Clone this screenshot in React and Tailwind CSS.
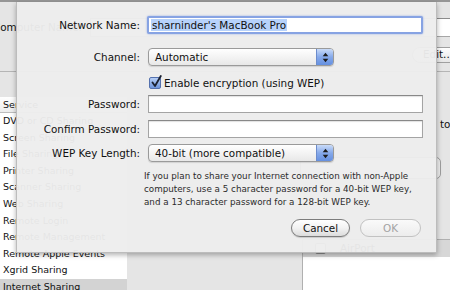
import React from 'react';

const services = [
  'DVD or CD Sharing',
  'Screen Sharing',
  'File Sharing',
  'Printer Sharing',
  'Scanner Sharing',
  'Web Sharing',
  'Remote Login',
  'Remote Management',
  'Remote Apple Events',
  'Xgrid Sharing',
  'Internet Sharing',
];

function Popup({ label }) {
  return (
    <div className="flex h-[18px] w-[186px] overflow-hidden rounded-[4px] border border-[#9a9a9a] bg-gradient-to-b from-white to-[#e8e8e8] shadow-[0_1px_1px_rgba(0,0,0,0.12)]">
      <div className="flex-1 pl-[6px] text-[10.4px] leading-[16px] text-[#111]">{label}</div>
      <div className="flex w-[17px] items-center justify-center border-l border-[#6c8ccc] bg-gradient-to-b from-[#c9dbf8] via-[#86a9ea] to-[#6590e0]">
        <svg width="7" height="11" viewBox="0 0 7 11">
          <path d="M3.5 0.8L6.3 4.3H0.7Z M3.5 10.2L0.7 6.7H6.3Z" fill="#1c1c1c" />
        </svg>
      </div>
    </div>
  );
}

function TextField() {
  return (
    <div className="h-[18px] w-[275px] border border-[#a4a4a4] border-t-[#888] bg-white shadow-[inset_0_1px_1px_rgba(0,0,0,0.12)]" />
  );
}

function Row({ label, children }) {
  return (
    <div className="flex items-center">
      <div className="w-[123px] text-right text-[10.4px] leading-[13px] text-[#111]">{label}</div>
      <div className="ml-[8px]">{children}</div>
    </div>
  );
}

export default function App() {
  return (
    <div className="relative h-[290px] w-[450px] overflow-hidden bg-[#e5e5e5] font-['DejaVu_Sans','Liberation_Sans',sans-serif] text-[#111]">
      {/* window behind the sheet */}
      <div className="flex h-full flex-col">
        <div className="h-[2px] shrink-0 bg-[#969696]" />
        <div className="flex h-[70px] shrink-0 flex-col border-b border-[#b5b5b5]">
          <div className="mt-[16px] flex items-center whitespace-nowrap">
            <span className="ml-[-7px] text-[10.4px] leading-[13px]">Computer Name:</span>
            <div className="ml-[8px] h-[19px] w-[380px] shrink-0 border border-[#a6a6a6] border-t-[#8c8c8c] bg-white" />
          </div>
          <div className="mt-[10px] flex whitespace-nowrap">
            <div className="ml-[412px] flex h-[16px] w-[70px] shrink-0 items-center rounded-full border border-[#a0a0a0] bg-gradient-to-b from-white to-[#e6e6e6] pl-[10px] text-[10.4px]">
              Edit...
            </div>
          </div>
        </div>
        <div className="flex flex-1">
          <div className="mt-[25px] flex w-[127px] shrink-0 flex-col bg-white">
            <div className="h-[16px] border-b border-[#bdbdbd] bg-gradient-to-b from-white to-[#ececec] pl-[3px] text-[9.5px] leading-[15px]">
              Service
            </div>
            {services.map((s) => (
              <div
                key={s}
                className={
                  s === 'Internet Sharing'
                    ? 'h-[16.6px] whitespace-nowrap bg-[#d3d3d3] pl-[3px] text-[9.5px] leading-[16.6px]'
                    : 'h-[16.6px] whitespace-nowrap pl-[3px] text-[9.5px] leading-[16.6px]'
                }
              >
                {s}
              </div>
            ))}
          </div>
          <div className="flex flex-1 flex-col">
            <div className="ml-[313px] mt-[46px] whitespace-nowrap text-[10.4px] leading-[13px]">to computers using:</div>
            <div className="ml-[173px] mt-[26px] h-[22px] w-[141px] rounded-[5px] border border-[#9d9d9d] bg-[#ececec]" />
            <div className="ml-[175px] mt-[60px] flex flex-1 flex-col border-l border-t border-[#b0b0b0] bg-white">
              <div className="flex h-[17px] items-center bg-[#d7d7d7]">
                <div className="ml-[12px] h-[11px] w-[11px] rounded-[2px] border border-[#8a8a8a] bg-white" />
                <span className="ml-[14px] whitespace-nowrap text-[10.4px]">AirPort</span>
              </div>
            </div>
          </div>
        </div>
      </div>

      {/* sheet */}
      <div className="absolute left-[16px] top-[2px] flex h-[251px] w-[421px] flex-col border-x border-b border-[#bcbcbc] bg-[#ededed]/[0.96] shadow-[0_2px_5px_rgba(0,0,0,0.3)]">
        <div className="mt-[14px]">
          <Row label="Network Name:">
            <div className="ml-[-1px] flex h-[18px] w-[276px] items-center rounded-[2px] border-2 border-[#87a3e3] bg-white pl-[2px] shadow-[0_0_2px_rgba(80,120,220,0.6)]">
              <span className="bg-[#b7d2fb] px-[1px] text-[10.4px] leading-[12px] whitespace-nowrap">sharninder's MacBook Pro</span>
            </div>
          </Row>
        </div>
        <div className="mt-[14px]">
          <Row label="Channel:">
            <Popup label="Automatic" />
          </Row>
        </div>
        <div className="mt-[11px] flex h-[12px] items-center pl-[132px]">
          <div className="relative h-[12px] w-[12px] rounded-[2px] border border-[#5471ae] bg-gradient-to-b from-[#b6cef5] to-[#6e95dc]">
            <svg className="absolute left-[1px] top-[-3px]" width="11" height="13" viewBox="0 0 11 13">
              <path d="M1.5 7.5L4 11L9.8 1" stroke="#1a2030" strokeWidth="1.8" fill="none" strokeLinecap="round" strokeLinejoin="round" />
            </svg>
          </div>
          <span className="ml-[3px] whitespace-nowrap text-[10.4px] leading-[13px]">Enable encryption (using WEP)</span>
        </div>
        <div className="mt-[6px]">
          <Row label="Password:">
            <TextField />
          </Row>
        </div>
        <div className="mt-[7px]">
          <Row label="Confirm Password:">
            <TextField />
          </Row>
        </div>
        <div className="mt-[6px]">
          <Row label="WEP Key Length:">
            <Popup label="40-bit (more compatible)" />
          </Row>
        </div>
        <p className="ml-[127px] mt-[7.5px] whitespace-nowrap text-[8.75px] leading-[13px] text-[#2b2b2b]">
          If you plan to share your Internet connection with non-Apple
          <br />
          computers, use a 5 character password for a 40-bit WEP key,
          <br />
          and a 13 character password for a 128-bit WEP key.
        </p>
        <div className="mr-[15px] mt-[10.5px] flex justify-end gap-[10px]">
          <button className="h-[18px] w-[59px] rounded-full border border-[#7c7c7c] bg-gradient-to-b from-white via-[#f2f2f2] to-[#dcdcdc] text-[10.4px] leading-[16px] text-[#111] shadow-[0_1px_1px_rgba(0,0,0,0.15)]">
            Cancel
          </button>
          <button className="h-[18px] w-[61px] rounded-full border border-[#c2c2c2] bg-gradient-to-b from-[#fafafa] to-[#ececec] text-[10.4px] leading-[16px] text-[#a3a3a3]">
            OK
          </button>
        </div>
      </div>
    </div>
  );
}
